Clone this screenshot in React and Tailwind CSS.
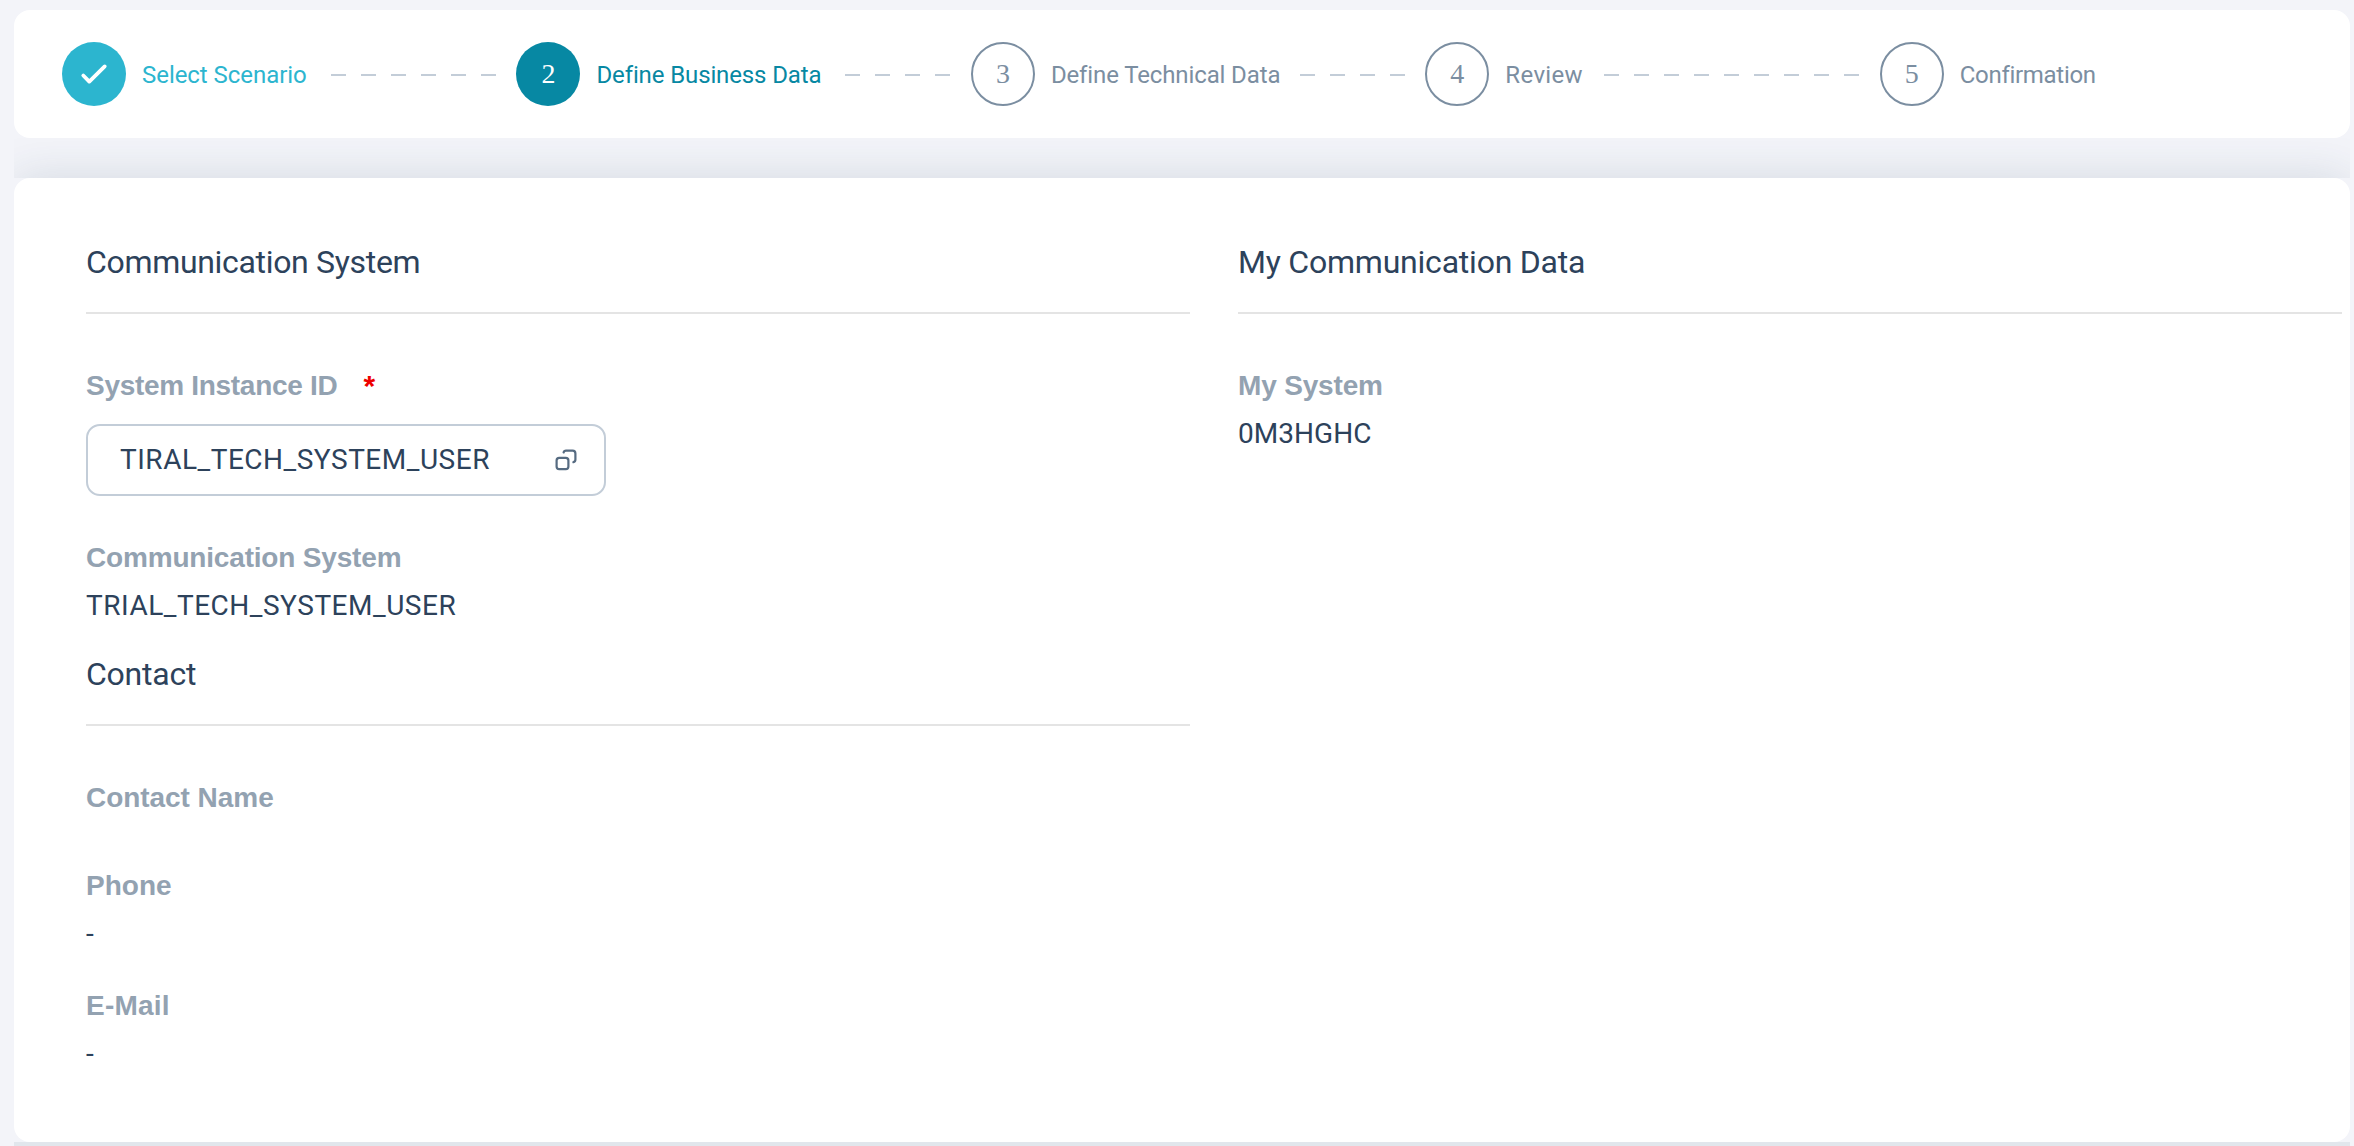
import React from "react";

function StepCircle({ number, state }) {
  if (state === "done") {
    return (
      <span className="flex h-16 w-16 shrink-0 items-center justify-center rounded-full bg-[#2cb5cf]">
        <svg className="h-16 w-16" viewBox="0 0 64 64" fill="none" stroke="#fff" strokeWidth="3.8" strokeLinecap="round" strokeLinejoin="round">
          <path d="M21.3 33.5 27.3 39.6 42.7 24.4" />
        </svg>
      </span>
    );
  }
  const look =
    state === "active"
      ? "bg-[#0788a3] text-white"
      : "border-2 border-[#7b8ea1] bg-white text-[#7b8ea1]";
  return (
    <span className={`flex h-16 w-16 shrink-0 items-center justify-center rounded-full font-['Liberation_Serif',serif] text-[28px] leading-8 ${look}`}>
      {number}
    </span>
  );
}

function Dashes({ count }) {
  return (
    <span className="ml-auto flex shrink-0 gap-[15px] pt-px">
      {Array.from({ length: count }, (_, i) => (
        <span key={i} className="h-0.5 w-[15px] bg-[#c3cdd8]" />
      ))}
    </span>
  );
}

const STEPS = [
  { label: "Select Scenario", state: "done", color: "text-[#2cb5cf] tracking-[-0.05px]", dashes: 6 },
  { label: "Define Business Data", state: "active", color: "text-[#0788a3] tracking-[-0.12px]", dashes: 4 },
  { label: "Define Technical Data", state: "open", color: "text-[#7b8ea1] tracking-[-0.12px]", dashes: 4 },
  { label: "Review", state: "open", color: "text-[#7b8ea1] tracking-[0.35px]", dashes: 9 },
  { label: "Confirmation", state: "open", color: "text-[#7b8ea1] tracking-[-0.3px]", dashes: 0 },
];

function Wizard() {
  return (
    <nav className="flex h-32 items-center rounded-2xl bg-white pl-12">
      {STEPS.map((step, i) => (
        <div key={step.label} className="flex w-[454.45px] shrink-0 items-center pr-[20.4px]">
          <StepCircle number={i + 1} state={step.state} />
          <span className={`ml-4 whitespace-nowrap pt-0.5 text-[24px] leading-8 ${step.color}`}>{step.label}</span>
          {step.dashes > 0 && <Dashes count={step.dashes} />}
        </div>
      ))}
    </nav>
  );
}

function SectionTitle({ children, className = "" }) {
  return (
    <h2 className={`h-[72px] border-b-2 border-[#e4e4e4] text-[32px] leading-10 text-[#2d425b] ${className}`}>
      {children}
    </h2>
  );
}

function Label({ children, className = "" }) {
  return (
    <div className={`h-12 font-['Liberation_Sans',sans-serif] text-[28px] font-bold leading-[50px] text-[#93a2b1] ${className}`}>
      {children}
    </div>
  );
}

function Value({ children, className = "" }) {
  return <div className={`h-12 text-[28px] leading-[50px] text-[#2d425b] ${className}`}>{children}</div>;
}

function ValueHelpIcon() {
  return (
    <svg className="h-[22px] w-[22px]" viewBox="0 0 22 22" fill="none" stroke="#566b81" strokeWidth="2.2" strokeLinecap="round">
      <rect x="1.6" y="8.8" width="11.8" height="11.4" rx="2.6" />
      <path d="M8.6 3.4C8.9 2.1 9.8 1.6 11 1.6H17.6C19.4 1.6 20.4 2.6 20.4 4.4V10.6C20.4 12 19.8 12.9 18.4 13.2" />
    </svg>
  );
}

export default function App() {
  return (
    <div className="h-[1146px] w-[2354px] overflow-hidden bg-[#f3f4f9] pl-3.5 pr-1 pt-2.5 font-[Roboto,sans-serif]">
      <Wizard />

      <div className="h-10 overflow-hidden pt-10">
        <div className="h-40 shadow-[0_0_44px_rgba(34,70,90,0.15)]" />
      </div>

      <main className="grid h-[964px] grid-cols-2 gap-12 rounded-2xl bg-white pl-[72px] pr-2 pt-16">
        <section>
          <SectionTitle className="tracking-[-0.32px]">Communication System</SectionTitle>
          <div className="mt-[47px] flex h-12 items-start">
            <Label className="tracking-[-0.3px]">System Instance ID</Label>
            <span className="ml-[26px] font-['Liberation_Sans',sans-serif] text-[30px] font-bold leading-[50px] text-[#ee0000]">*</span>
          </div>
          <div className="mt-[15px] flex h-[72px] w-[520px] items-center justify-between rounded-[14px] border-2 border-[#c3cdd8] pl-8 pr-[27px]">
            <div className="text-[28px] leading-[48px] tracking-[0.52px] text-[#2d425b]">TIRAL_TECH_SYSTEM_USER</div>
            <ValueHelpIcon />
          </div>
          <Label className="mt-[37px] tracking-[-0.18px]">Communication System</Label>
          <Value className="tracking-[0.52px]">TRIAL_TECH_SYSTEM_USER</Value>

          <SectionTitle className="mt-[25px] tracking-[-0.25px]">Contact</SectionTitle>
          <Label className="mt-[47px] tracking-[-0.05px]">Contact Name</Label>
          <Label className="mt-10">Phone</Label>
          <Value>-</Value>
          <Label className="mt-6 tracking-[0.2px]">E-Mail</Label>
          <Value>-</Value>
        </section>

        <section>
          <SectionTitle className="tracking-[-0.22px]">My Communication Data</SectionTitle>
          <Label className="mt-[47px] tracking-[-0.17px]">My System</Label>
          <Value className="tracking-[0.05px]">0M3HGHC</Value>
        </section>
      </main>

      <div className="h-1 bg-[#e1e6ec]" />
    </div>
  );
}
